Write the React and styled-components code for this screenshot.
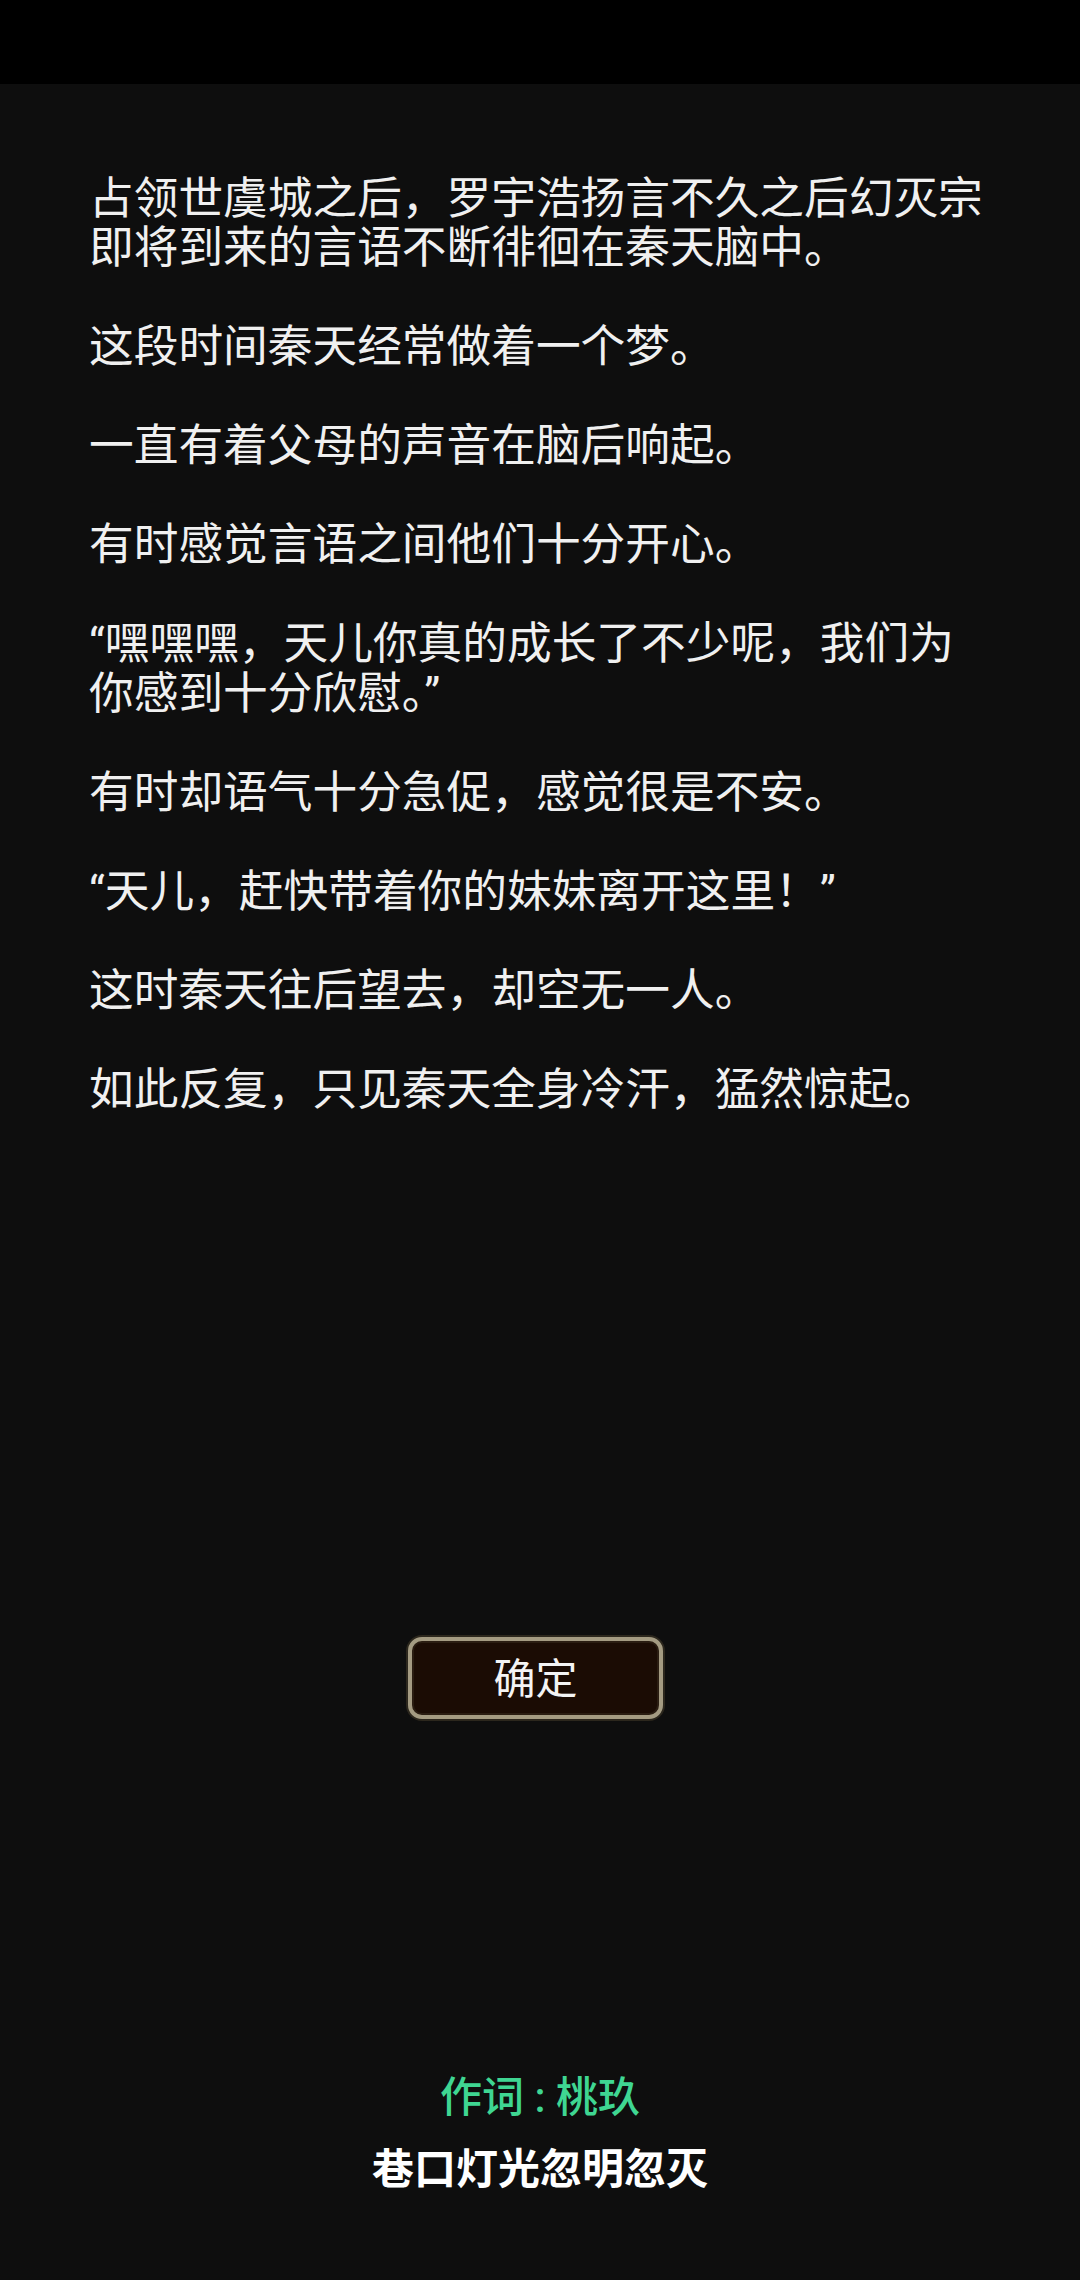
import React from "react";
import styled, { createGlobalStyle } from "styled-components";

const paragraphs = [
  "占领世虞城之后，罗宇浩扬言不久之后幻灭宗即将到来的言语不断徘徊在秦天脑中。",
  "这段时间秦天经常做着一个梦。",
  "一直有着父母的声音在脑后响起。",
  "有时感觉言语之间他们十分开心。",
  "“嘿嘿嘿，天儿你真的成长了不少呢，我们为你感到十分欣慰。”",
  "有时却语气十分急促，感觉很是不安。",
  "“天儿，赶快带着你的妹妹离开这里！”",
  "这时秦天往后望去，却空无一人。",
  "如此反复，只见秦天全身冷汗，猛然惊起。",
];

const App = () => {
  return (
    <>
      <GlobalStyle />
      <Screen>
        <StatusBar />
        <Story>
          {paragraphs.map((text, i) => (
            <Paragraph key={i}>{text}</Paragraph>
          ))}
        </Story>
        <ButtonRow>
          <ConfirmButton>确定</ConfirmButton>
        </ButtonRow>
        <Lyrics>
          <Credit>作词 : 桃玖</Credit>
          <LyricLine>巷口灯光忽明忽灭</LyricLine>
        </Lyrics>
      </Screen>
    </>
  );
};

export default App;

const GlobalStyle = createGlobalStyle`
  html, body {
    margin: 0;
    padding: 0;
    background: #0e0e0e;
  }
  * {
    box-sizing: border-box;
  }
`;

const Screen = styled.div`
  width: 1080px;
  height: 2280px;
  display: flex;
  flex-direction: column;
  background: #0e0e0e;
  font-family: Roboto, "Noto Sans CJK SC", sans-serif;
  color: #f2f2f2;
  overflow: hidden;
`;

const StatusBar = styled.div`
  height: 84px;
  flex-shrink: 0;
  background: #000000;
`;

const Story = styled.div`
  padding: 91px 91px 0 89px;
  display: flex;
  flex-direction: column;
  gap: 49.6px;
`;

const Paragraph = styled.p`
  margin: 0;
  font-size: 44.7px;
  line-height: 49.4px;
  color: #f0f0f0;
`;

const ButtonRow = styled.div`
  display: flex;
  justify-content: center;
  padding-right: 9px;
  margin-top: 522px;
`;

const ConfirmButton = styled.button`
  width: 255px;
  height: 82px;
  border-radius: 14px;
  border: 4px solid #a49b82;
  background: #1b0c04;
  box-shadow: 0 0 0 2px #2c271d, inset 0 0 0 2px #2a1d12;
  color: #f4f4f4;
  font-family: Roboto, "Noto Sans CJK SC", sans-serif;
  font-size: 42px;
  line-height: 1;
  padding: 4px 0 0;
  cursor: pointer;
`;

const Lyrics = styled.div`
  margin-top: auto;
  padding-bottom: 85px;
  display: flex;
  flex-direction: column;
  align-items: center;
  gap: 22px;
`;

const Credit = styled.div`
  font-size: 42px;
  line-height: 50px;
  font-weight: 500;
  color: #3fd692;
`;

const LyricLine = styled.div`
  font-size: 42px;
  line-height: 50px;
  font-weight: 700;
  color: #ffffff;
`;
